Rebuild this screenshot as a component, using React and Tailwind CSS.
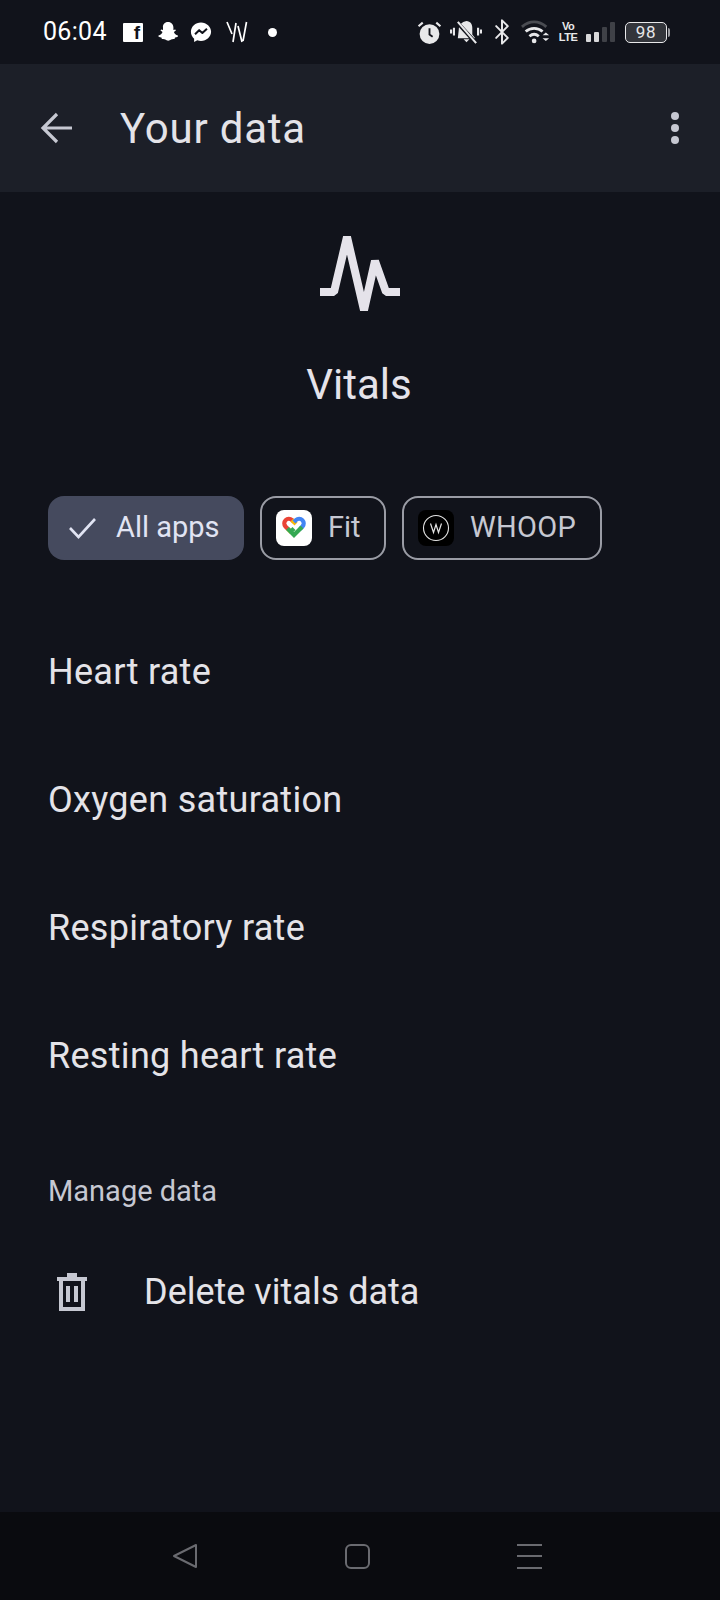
import React from 'react';
import { Bluetooth } from 'lucide-react';

const font = { sans: 'font-["Roboto","Liberation_Sans",sans-serif]' };

const rows = ['Heart rate', 'Oxygen saturation', 'Respiratory rate', 'Resting heart rate'];

// Status bar, left side
const LeftStatus = () => (
    <div className="flex items-center">
        <span className="text-[25px] font-normal text-white tracking-[0.3px] w-[64px]">06:04</span>
        <div className="ml-[16px] w-[20px] h-[19px] bg-white rounded-[1px] flex justify-end pr-[3px]">
            <span className="text-[#11131b] text-[19px] font-bold leading-[20px] font-['Liberation_Sans',sans-serif]">f</span>
        </div>
        <svg viewBox="0 0 24 24" className="ml-[13px] w-[24px] h-[24px]" fill="white">
            <path d="M12 2c3.400 0 5.400 2.500 5.400 5.600v2.300l1.900-.4.6 1-2 1.400c.6 1.700 2 2.900 4 3.600l.1 1c-1 .6-2.200.8-3 1l-.5 1.500c-1.300-.2-2.500-.1-3.400.5-1 .7-1.800 1.200-2.900 1.200s-1.900-.5-2.900-1.200c-.9-.6-2.100-.7-3.400-.5l-.5-1.500c-.8-.2-2-.4-3-1l.1-1c2-.7 3.400-1.900 4-3.600l-2-1.400.6-1 1.900.4V7.600C6.600 4.500 8.600 2 12 2z" />
        </svg>
        <svg viewBox="0 0 24 24" className="ml-[10px] w-[22px] h-[22px]">
            <path fill="white" d="M12 1.500C5.900 1.500 1 6 1 11.800c0 3 1.300 5.700 3.500 7.500V23l3.400-1.900c1.300.5 2.700.7 4.100.7 6.100 0 11-4.500 11-10S18.100 1.500 12 1.500z" />
            <path fill="none" stroke="#11131b" strokeWidth="2.200" strokeLinejoin="round" d="M5.500 14.500l4.500-4.500 3.500 3 5-4.500" />
        </svg>
        <svg viewBox="0 0 24 24" className="ml-[13px] w-[24px] h-[24px]" fill="none" stroke="white" strokeWidth="1.700">
            <path d="M2 2l5 12M11 3L8 22M13 6l4 16M21.500 2L18 21" />
        </svg>
        <span className="ml-[19px] w-[9px] h-[9px] rounded-full bg-white" />
    </div>
);

// Status bar, right side
const RightStatus = () => (
    <div className="flex items-center text-[#e8e8ea]">
        <svg viewBox="0 0 24 24" className="w-[25px] h-[25px]">
            <circle cx="12" cy="13.500" r="9.500" fill="#e8e8ea" />
            <path d="M12 8v6l3 2" fill="none" stroke="#11131b" strokeWidth="1.800" />
            <path d="M1.500 6l4-3.500M22.500 6l-4-3.500" stroke="#e8e8ea" strokeWidth="2" />
        </svg>
        <svg viewBox="0 0 34 28" className="ml-[8px] w-[33px] h-[27px]" fill="none">
            <path fill="#e8e8ea" d="M17 2c4 .5 6 3 6 7v7l3 4H8l1-9c0-5 3-8 8-9zM14 21h6l-3 3z" />
            <path stroke="#11131b" strokeWidth="4" d="M6 2l20 22" />
            <path stroke="#e8e8ea" strokeWidth="2.200" d="M8 3l19 22M1 11v4M4 9v8M29 9v8M32 11v4" />
        </svg>
        <Bluetooth className="ml-[5px] w-[28px] h-[28px]" strokeWidth={1.700} />
        <svg viewBox="0 0 32 28" className="ml-[5px] w-[30px] h-[27px]" fill="none">
            <path stroke="#4a4c52" strokeWidth="3" d="M1 8c8-7 18-7 26 0" />
            <path stroke="#e8e8ea" strokeWidth="3" d="M5 13c5-4.500 13-4.500 18 0M9 18c3-2.500 7-2.500 10 0" />
            <circle cx="14" cy="23" r="2.500" fill="#e8e8ea" />
            <path fill="#e8e8ea" d="M23 17h7l-3.500-3zM23 20h7l-3.500 3z" />
        </svg>
        <div className="ml-[9px] w-[16px] flex flex-col items-center text-[11px] leading-[11px] font-bold font-['Liberation_Sans',sans-serif] tracking-[-0.5px]">
            <span>Vo</span>
            <span>LTE</span>
        </div>
        <div className="ml-[10px] flex items-end gap-[3px] h-[20px]">
            <span className="w-[5px] h-[8px] rounded-[1px] bg-[#d8d8da]" />
            <span className="w-[5px] h-[10px] rounded-[1px] bg-[#d8d8da]" />
            <span className="w-[5px] h-[15px] rounded-[1px] bg-[#3f4147]" />
            <span className="w-[5px] h-[20px] rounded-[1px] bg-[#3f4147]" />
        </div>
        <div className="ml-[10px] flex items-center">
            <div className="w-[42px] h-[21px] rounded-[5px] border-[1.500px] border-[#e8e8ea] bg-[#33353b] flex items-center justify-center text-[17px] leading-none text-[#e8e8ea] tracking-[0.8px]">98</div>
            <span className="ml-[1px] w-[2px] h-[9px] bg-[#9a9ba0] rounded-r-sm" />
        </div>
    </div>
);

const FitLogo = () => (
    <div className="ml-[14px] w-[36px] h-[36px] bg-white rounded-[8px] flex items-center justify-center">
        <svg viewBox="0 0 30 30" className="w-[30px] h-[30px]" fill="none" strokeWidth="4.200" strokeLinecap="butt">
            <path stroke="#ea4335" d="M9 16l-2.500-2.500a4.600 4.600 0 0 1 6.500-6.500l2 2" />
            <path stroke="#fbbc04" d="M9 16l3.500 3.500M13 7l4 4" />
            <path stroke="#4285f4" d="M15 9l2-2a4.600 4.600 0 0 1 6.500 6.500L21 16" />
            <path stroke="#34a853" d="M8.500 15.500L15 22l8-8M12 15.500l3 3" />
        </svg>
    </div>
);

const WhoopLogo = () => (
    <div className="ml-[14px] w-[36px] h-[36px] bg-black rounded-[8px] flex items-center justify-center">
        <svg viewBox="0 0 28 28" className="w-[28px] h-[28px]" fill="none" stroke="#e4e4e4">
            <circle cx="14" cy="14" r="12.500" strokeWidth="1.100" />
            <path strokeWidth="1.200" d="M8.500 9.500l3 9 2.500-8 2.500 8 3-9" />
        </svg>
    </div>
);

const App = () => {
    return (
        <div className={`w-[720px] h-[1600px] flex flex-col bg-[#11131b] ${font.sans}`}>

            {/* Status bar */}
            <div className="h-[64px] shrink-0 pl-[43px] pr-[50px] flex items-center justify-between">
                <LeftStatus />
                <RightStatus />
            </div>

            {/* App bar */}
            <div className="h-[128px] shrink-0 bg-[#1c1f28] pl-[40px] pr-[41px] flex items-center">
                <svg viewBox="0 0 32 32" className="w-[32px] h-[32px]" fill="none" stroke="#c6c8d2" strokeWidth="3.200">
                    <path d="M3 16H33M17 2L3 16L17 30" />
                </svg>
                <h1 className="ml-[48px] text-[42px] text-[#e4e3e8] font-normal tracking-[0.8px]">Your data</h1>
                <div className="ml-auto flex flex-col gap-[4px]">
                    <span className="w-[8px] h-[8px] rounded-full bg-[#c6c8d2]" />
                    <span className="w-[8px] h-[8px] rounded-full bg-[#c6c8d2]" />
                    <span className="w-[8px] h-[8px] rounded-full bg-[#c6c8d2]" />
                </div>
            </div>

            <main className="flex-1 flex flex-col">

                {/* Heading */}
                <div className="pt-[44px] flex flex-col items-center">
                    <svg viewBox="0 0 80 80" className="w-[80px] h-[80px] overflow-visible" fill="none" stroke="#e5e3ea" strokeWidth="8" strokeLinejoin="bevel">
                        <path d="M0 56H14L27 1L44 74L55 25L66 56H80" />
                    </svg>
                    <h2 className="mt-[41px] text-[42px] leading-[56px] text-[#e5e3ea] font-normal -translate-x-[1px]">Vitals</h2>
                </div>

                {/* Filter chips */}
                <div className="mt-[83px] px-[48px] flex gap-[16px]">
                    <div className="w-[196px] h-[64px] rounded-[16px] bg-[#454a5e] flex items-center pl-[21px]">
                        <svg viewBox="0 0 27 22" className="w-[27px] h-[22px]" fill="none" stroke="#e1e4f3" strokeWidth="2.600">
                            <path d="M1 11L9.500 20L26 2" />
                        </svg>
                        <span className="ml-[20px] text-[29px] text-[#e1e4f3]">All apps</span>
                    </div>
                    <div className="w-[126px] h-[64px] rounded-[16px] border-2 border-[#9a9ca5] flex items-center">
                        <FitLogo />
                        <span className="ml-[16px] text-[29px] text-[#c6c8d2]">Fit</span>
                    </div>
                    <div className="w-[200px] h-[64px] rounded-[16px] border-2 border-[#9a9ca5] flex items-center">
                        <WhoopLogo />
                        <span className="ml-[16px] text-[29px] text-[#c6c8d2] tracking-[0.3px]">WHOOP</span>
                    </div>
                </div>

                {/* Metric list */}
                <div className="mt-[48px] flex flex-col">
                    {rows.map((r) => (
                        <div key={r} className="h-[128px] px-[48px] flex items-center text-[36px] tracking-[0.3px] text-[#e4e3e8]">{r}</div>
                    ))}
                </div>

                {/* Manage data */}
                <div className="mt-[51px] px-[48px] text-[29px] leading-[40px] text-[#c6c8d2]">Manage data</div>
                <div className="mt-[51px] px-[48px] flex items-center h-[60px]">
                    <svg viewBox="0 0 30 38" className="ml-[9px] w-[30px] h-[38px]" fill="none" stroke="#c6c8d2" strokeWidth="4">
                        <path d="M0 6h30M4 6v30h22V6M10 2h10M11 13v16M19 13v16" />
                    </svg>
                    <span className="ml-[57px] text-[36px] text-[#e4e3e8]">Delete vitals data</span>
                </div>
            </main>

            {/* Android nav bar */}
            <div className="h-[88px] shrink-0 bg-[#0a0b0f] flex items-center justify-between pl-[172px] pr-[178px]">
                <svg viewBox="0 0 26 26" className="w-[26px] h-[26px]" fill="none" stroke="#6a6b70" strokeWidth="2" strokeLinejoin="round">
                    <path d="M2 13L24 2v22z" />
                </svg>
                <div className="w-[25px] h-[25px] rounded-[6px] border-2 border-[#6a6b70]" />
                <div className="w-[25px] h-[25px] flex flex-col justify-between">
                    <span className="h-[2px] bg-[#6a6b70]" />
                    <span className="h-[2px] bg-[#6a6b70]" />
                    <span className="h-[2px] bg-[#6a6b70]" />
                </div>
            </div>
        </div>
    );
};

export default App;
